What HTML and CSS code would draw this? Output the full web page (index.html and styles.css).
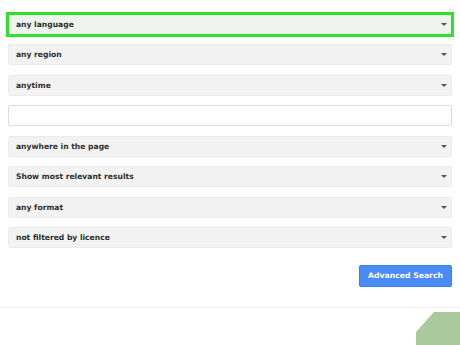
FILE: index.html
```html
<!DOCTYPE html>
<html lang="en">
<head>
  <meta charset="UTF-8" />
  <title>Advanced Search</title>
  <link rel="stylesheet" href="styles.css">
</head>
<body>

  <div class="form">
    <div class="field select active">any language</div>
    <div class="field select">any region</div>
    <div class="field select">anytime</div>
    <div class="field input"></div>
    <div class="field select">anywhere in the page</div>
    <div class="field select">Show most relevant results</div>
    <div class="field select">any format</div>
    <div class="field select">not filtered by licence</div>

    <div class="actions">
      <button class="search-btn">Advanced Search</button>
    </div>
  </div>

  <div class="footer-line"></div>

  <svg class="corner" width="44" height="33" viewBox="0 0 44 33">
    <polygon points="0,33 0,20 18,0 44,0 44,33" fill="#a9c89b" />
  </svg>

</body>
</html>
```

FILE: styles.css
```css
body { margin: 0; background: #fff; font-family: "DejaVu Sans", Verdana, sans-serif; overflow: hidden; }
.form { padding: 14px 8px 0 8px; }
.field { height: 21px; box-sizing: border-box; margin-bottom: 9.45px; border: 1px solid #ececec; border-radius: 2px; background: #f2f2f2; font-size: 7.6px; font-weight: bold; color: #2e2e2e; line-height: 19px; padding-left: 7px; position: relative; }
.field.select::after { content: ""; position: absolute; right: 4px; top: 8px; border-left: 3px solid transparent; border-right: 3px solid transparent; border-top: 3px solid #555; }
.field.input { background: #fff; border-color: #dcdcdc; }
.field.active { border-radius: 0; outline: 3px solid #2fe02f; outline-offset: -1px; background: #eef3ee; }
.actions { display: flex; justify-content: flex-end; padding-top: 7px; }
.search-btn { width: 93px; height: 22px; background: #4a8af4; border: 1px solid #3d7de6; border-radius: 2px; color: #fff; font-family: "DejaVu Sans", Verdana, sans-serif; font-size: 7.7px; font-weight: bold; padding: 0; }
.footer-line { margin-top: 20px; border-top: 1px solid #f4f4f4; }
.corner { position: absolute; right: 0; bottom: 0; display: block; }
```
